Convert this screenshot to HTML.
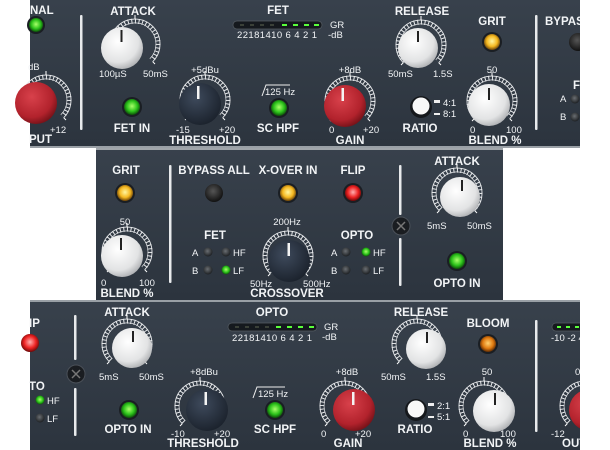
<!DOCTYPE html>
<html><head><meta charset="utf-8"><style>
html,body{margin:0;padding:0;background:#fff;width:610px;height:450px;overflow:hidden}
svg{display:block}
text{font-family:"Liberation Sans",sans-serif;fill:#f2f4f6;font-weight:bold}
.s{font-size:9.5px;font-weight:normal}
.l{font-size:11.5px}
</style></head><body>
<svg width="610" height="450" viewBox="0 0 610 450" xmlns="http://www.w3.org/2000/svg">
<defs>
<linearGradient id="pn" x1="0" y1="0" x2="0" y2="1"><stop offset="0" stop-color="#38414c"/><stop offset="1" stop-color="#2c343e"/></linearGradient>
<radialGradient id="wk" cx="0.4" cy="0.35" r="0.7"><stop offset="0" stop-color="#ffffff"/><stop offset="0.7" stop-color="#e2e3e4"/><stop offset="1" stop-color="#a9abae"/></radialGradient>
<radialGradient id="dk" cx="0.4" cy="0.35" r="0.7"><stop offset="0" stop-color="#3e4a5c"/><stop offset="1" stop-color="#1a212b"/></radialGradient>
<radialGradient id="rk" cx="0.4" cy="0.35" r="0.7"><stop offset="0" stop-color="#d8414b"/><stop offset="0.7" stop-color="#b2222c"/><stop offset="1" stop-color="#6e1016"/></radialGradient>
<radialGradient id="gl" cx="0.5" cy="0.45" r="0.55"><stop offset="0" stop-color="#a8ff6a"/><stop offset="0.6" stop-color="#2bc21a"/><stop offset="1" stop-color="#0d4a0a"/></radialGradient>
<radialGradient id="yl" cx="0.5" cy="0.45" r="0.55"><stop offset="0" stop-color="#fff6a0"/><stop offset="0.6" stop-color="#f5b820"/><stop offset="1" stop-color="#6a4208"/></radialGradient>
<radialGradient id="ol" cx="0.5" cy="0.45" r="0.55"><stop offset="0" stop-color="#ffd070"/><stop offset="0.6" stop-color="#e07a10"/><stop offset="1" stop-color="#5a2a05"/></radialGradient>
<radialGradient id="rl" cx="0.5" cy="0.45" r="0.55"><stop offset="0" stop-color="#ffb0b0"/><stop offset="0.6" stop-color="#ee2222"/><stop offset="1" stop-color="#6a0808"/></radialGradient>
<radialGradient id="bl" cx="0.45" cy="0.4" r="0.6"><stop offset="0" stop-color="#555"/><stop offset="1" stop-color="#111"/></radialGradient>
<radialGradient id="sl" cx="0.45" cy="0.4" r="0.6"><stop offset="0" stop-color="#6a6e72"/><stop offset="1" stop-color="#1c1f22"/></radialGradient>
<g id="ring">
<path d="M-16.3 16.3 A23 23 0 1 1 16.3 16.3" fill="none" stroke="#e8eaec" stroke-width="5" stroke-dasharray="1 2.6"/>
<path d="M-17.7 17.7 A25 25 0 1 1 17.7 17.7" fill="none" stroke="#e8eaec" stroke-width="0.9"/>
<path d="M-14.8 14.8 A21 21 0 1 1 14.8 14.8" fill="none" stroke="#e8eaec" stroke-width="0.7"/>
<line x1="0" y1="-25" x2="0" y2="-29" stroke="#fff" stroke-width="1"/>
<line x1="-17.7" y1="17.7" x2="-20" y2="20" stroke="#fff" stroke-width="1"/>
<line x1="17.7" y1="17.7" x2="20" y2="20" stroke="#fff" stroke-width="1"/>
</g>
<g id="bz"><circle r="10" fill="#1a1e23"/></g>
</defs>

<rect x="30" y="0" width="550" height="147" fill="url(#pn)"/>
<rect x="30" y="146" width="550" height="2" fill="#9aa0a6"/>
<rect x="96" y="148" width="407" height="152" fill="url(#pn)"/>
<rect x="96" y="148" width="407" height="2" fill="#a0a5aa"/>
<rect x="30" y="301" width="550" height="149" fill="url(#pn)"/>
<rect x="30" y="300" width="550" height="2" fill="#9aa0a6"/>

<!-- PANEL 1 -->
<text x="30" y="14" class="l">NAL</text>
<circle cx="36" cy="25" r="9" fill="#1a1e23"/><circle cx="36" cy="25" r="7" fill="url(#gl)"/>
<text x="28" y="70" class="s">dB</text>
<g transform="translate(46,100)"><use href="#ring"/></g>
<circle cx="36" cy="103" r="21" fill="url(#rk)"/>
<text x="50" y="133" class="s">+12</text>
<text x="29" y="143" class="l">PUT</text>
<rect x="80" y="15" width="2.5" height="115" rx="1" fill="#e8eaec"/>

<text x="133" y="15" class="l" text-anchor="middle">ATTACK</text>
<g transform="translate(135,44)"><use href="#ring"/></g>
<circle cx="122" cy="48" r="21" fill="url(#wk)"/>
<rect x="120.5" y="30" width="2" height="12" fill="#222"/>
<text x="99" y="77" class="s">100µS</text>
<text x="143" y="77" class="s">50mS</text>
<circle cx="132" cy="107" r="10" fill="#1a1e23"/><circle cx="132" cy="107" r="8" fill="url(#gl)"/>
<text x="132" y="132" class="l" text-anchor="middle">FET IN</text>

<text x="205" y="73" class="s" text-anchor="middle">+5dBu</text>
<g transform="translate(205,100)"><use href="#ring"/></g>
<circle cx="200" cy="104" r="21" fill="url(#dk)"/>
<rect x="197" y="86" width="2.5" height="13" fill="#f4f4f4"/>
<text x="176" y="133" class="s">-15</text>
<text x="219" y="133" class="s">+20</text>
<text x="205" y="144" class="l" text-anchor="middle">THRESHOLD</text>

<text x="278" y="14" class="l" text-anchor="middle">FET</text>
<rect x="233" y="21" width="89" height="8" rx="4" fill="#15191e" stroke="#555c63" stroke-width="0.7"/>
<g stroke-width="2"><line x1="240" y1="25" x2="244" y2="25" stroke="#3a4038"/><line x1="250" y1="25" x2="254" y2="25" stroke="#3a4038"/><line x1="260" y1="25" x2="264" y2="25" stroke="#3a4038"/><line x1="270" y1="25" x2="274" y2="25" stroke="#3a4038"/><line x1="282" y1="25" x2="287" y2="25" stroke="#5aff3a"/><line x1="293" y1="25" x2="298" y2="25" stroke="#5aff3a"/><line x1="304" y1="25" x2="309" y2="25" stroke="#5aff3a"/><line x1="314" y1="25" x2="319" y2="25" stroke="#5aff3a"/></g>
<text x="237" y="38" class="s" textLength="80">22181410 6 4 2 1</text>
<text x="330" y="28" class="s" font-weight="bold">GR</text>
<text x="328" y="38" class="s">-dB</text>
<path d="M262 96 L266 85 L290 85" fill="none" stroke="#eee" stroke-width="1"/>
<text x="265" y="95" class="s">125 Hz</text>
<circle cx="279" cy="108" r="10" fill="#1a1e23"/><circle cx="279" cy="108" r="8" fill="url(#gl)"/>
<text x="278" y="132" class="l" text-anchor="middle">SC HPF</text>

<text x="350" y="73" class="s" text-anchor="middle">+8dB</text>
<g transform="translate(350,101)"><use href="#ring"/></g>
<circle cx="345" cy="106" r="21" fill="url(#rk)"/>
<rect x="341.5" y="88" width="2.5" height="13" fill="#f4f4f4"/>
<text x="329" y="133" class="s">0</text>
<text x="363" y="133" class="s">+20</text>
<text x="350" y="144" class="l" text-anchor="middle">GAIN</text>

<text x="422" y="15" class="l" text-anchor="middle">RELEASE</text>
<g transform="translate(421,45)"><use href="#ring"/></g>
<circle cx="418" cy="48" r="20" fill="url(#wk)"/>
<rect x="417" y="31" width="2" height="11" fill="#222"/>
<text x="388" y="77" class="s">50mS</text>
<text x="433" y="77" class="s">1.5S</text>
<circle cx="421" cy="107" r="11" fill="#15181c"/>
<circle cx="421" cy="106" r="8.5" fill="#f8f8f8"/>
<rect x="434" y="100" width="6" height="3" fill="#eee"/><text x="443" y="106" class="s">4:1</text>
<rect x="434" y="113" width="6" height="2" fill="#eee"/><text x="443" y="117" class="s">8:1</text>
<text x="420" y="132" class="l" text-anchor="middle">RATIO</text>

<text x="492" y="25" class="l" text-anchor="middle">GRIT</text>
<circle cx="492" cy="42" r="10" fill="#1a1e23"/><circle cx="492" cy="42" r="8" fill="url(#yl)"/>
<text x="492" y="73" class="s" text-anchor="middle">50</text>
<g transform="translate(492,101)"><use href="#ring"/></g>
<circle cx="489" cy="105" r="21" fill="url(#wk)"/>
<rect x="488" y="88" width="2" height="12" fill="#222"/>
<text x="470" y="133" class="s">0</text>
<text x="506" y="133" class="s">100</text>
<text x="495" y="144" class="l" text-anchor="middle">BLEND %</text>
<rect x="535" y="15" width="2.5" height="115" rx="1" fill="#e8eaec"/>
<text x="545" y="25" class="l">BYPAS</text>
<circle cx="578" cy="42" r="9" fill="url(#bl)"/>
<text x="573" y="89" class="l">F</text>
<text x="560" y="102" class="s" font-weight="bold">A</text><circle cx="575" cy="99" r="4.5" fill="url(#sl)"/>
<text x="560" y="120" class="s" font-weight="bold">B</text><circle cx="575" cy="117" r="4.5" fill="url(#sl)"/>

<!-- PANEL 2 -->
<text x="126" y="174" class="l" text-anchor="middle">GRIT</text>
<circle cx="125" cy="193" r="10" fill="#1a1e23"/><circle cx="125" cy="193" r="8" fill="url(#yl)"/>
<text x="125" y="225" class="s" text-anchor="middle">50</text>
<g transform="translate(127,252)"><use href="#ring"/></g>
<circle cx="122" cy="256" r="21" fill="url(#wk)"/>
<rect x="120" y="238" width="2" height="12" fill="#222"/>
<text x="101" y="286" class="s">0</text>
<text x="139" y="286" class="s">100</text>
<text x="127" y="297" class="l" text-anchor="middle">BLEND %</text>
<rect x="169" y="165" width="2.5" height="118" rx="1" fill="#e8eaec"/>

<text x="214" y="174" class="l" text-anchor="middle">BYPASS ALL</text>
<circle cx="214" cy="193" r="9" fill="url(#bl)"/>
<text x="288" y="174" class="l" text-anchor="middle">X-OVER IN</text>
<circle cx="288" cy="193" r="10" fill="#1a1e23"/><circle cx="288" cy="193" r="8" fill="url(#yl)"/>
<text x="353" y="174" class="l" text-anchor="middle">FLIP</text>
<circle cx="353" cy="193" r="10" fill="#1a1e23"/><circle cx="353" cy="193" r="8" fill="url(#rl)"/>

<text x="215" y="239" class="l" text-anchor="middle">FET</text>
<text x="192" y="256" class="s" font-weight="bold">A</text><circle cx="208" cy="252" r="4.5" fill="url(#sl)"/><circle cx="226" cy="252" r="4.5" fill="url(#sl)"/><text x="233" y="256" class="s" font-weight="bold">HF</text>
<text x="192" y="274" class="s" font-weight="bold">B</text><circle cx="208" cy="270" r="4.5" fill="url(#sl)"/><circle cx="226" cy="270" r="4.5" fill="url(#gl)"/><text x="233" y="274" class="s" font-weight="bold">LF</text>

<text x="287" y="225" class="s" text-anchor="middle">200Hz</text>
<g transform="translate(288,256)"><use href="#ring"/></g>
<circle cx="289" cy="261" r="21" fill="url(#dk)"/>
<rect x="287.5" y="243" width="2.5" height="13" fill="#f4f4f4"/>
<text x="250" y="287" class="s">50Hz</text>
<text x="303" y="287" class="s">500Hz</text>
<text x="287" y="297" class="l" text-anchor="middle">CROSSOVER</text>

<text x="357" y="239" class="l" text-anchor="middle">OPTO</text>
<text x="331" y="256" class="s" font-weight="bold">A</text><circle cx="346" cy="252" r="4.5" fill="url(#sl)"/><circle cx="366" cy="252" r="4.5" fill="url(#gl)"/><text x="373" y="256" class="s" font-weight="bold">HF</text>
<text x="331" y="274" class="s" font-weight="bold">B</text><circle cx="346" cy="270" r="4.5" fill="url(#sl)"/><circle cx="366" cy="270" r="4.5" fill="url(#sl)"/><text x="373" y="274" class="s" font-weight="bold">LF</text>

<rect x="399" y="165" width="2.5" height="50" rx="1" fill="#e8eaec"/>
<rect x="399" y="238" width="2.5" height="48" rx="1" fill="#e8eaec"/>
<circle cx="401" cy="226" r="9" fill="#1a1d21" stroke="#4a5058" stroke-width="1"/>
<path d="M397 222 L405 230 M405 222 L397 230" stroke="#777" stroke-width="1.5"/>

<text x="457" y="165" class="l" text-anchor="middle">ATTACK</text>
<g transform="translate(457,193)"><use href="#ring"/></g>
<circle cx="460" cy="197" r="20" fill="url(#wk)"/>
<rect x="461" y="180" width="2" height="11" fill="#222"/>
<text x="427" y="229" class="s">5mS</text>
<text x="467" y="229" class="s">50mS</text>
<circle cx="457" cy="261" r="10" fill="#1a1e23"/><circle cx="457" cy="261" r="8" fill="url(#gl)"/>
<text x="457" y="287" class="l" text-anchor="middle">OPTO IN</text>

<!-- PANEL 3 -->
<text x="29" y="327" class="l">IP</text>
<circle cx="30" cy="343" r="9" fill="url(#rl)"/>
<text x="29" y="390" class="l">TO</text>
<circle cx="40" cy="400" r="4.5" fill="url(#gl)"/><text x="47" y="404" class="s" font-weight="bold">HF</text>
<circle cx="40" cy="418" r="4.5" fill="url(#sl)"/><text x="47" y="422" class="s" font-weight="bold">LF</text>
<rect x="74" y="315" width="2.5" height="45" rx="1" fill="#e8eaec"/>
<rect x="74" y="388" width="2.5" height="48" rx="1" fill="#e8eaec"/>
<circle cx="76" cy="374" r="9" fill="#1a1d21" stroke="#4a5058" stroke-width="1"/>
<path d="M72 370 L80 378 M80 370 L72 378" stroke="#777" stroke-width="1.5"/>

<text x="127" y="316" class="l" text-anchor="middle">ATTACK</text>
<g transform="translate(127,344)"><use href="#ring"/></g>
<circle cx="132" cy="348" r="20" fill="url(#wk)"/>
<rect x="132" y="331" width="2" height="11" fill="#222"/>
<text x="99" y="380" class="s">5mS</text>
<text x="139" y="380" class="s">50mS</text>
<circle cx="129" cy="410" r="10" fill="#1a1e23"/><circle cx="129" cy="410" r="8" fill="url(#gl)"/>
<text x="128" y="433" class="l" text-anchor="middle">OPTO IN</text>

<text x="204" y="375" class="s" text-anchor="middle">+8dBu</text>
<g transform="translate(200,406)"><use href="#ring"/></g>
<circle cx="207" cy="410" r="21" fill="url(#dk)"/>
<rect x="204.5" y="392" width="2.5" height="13" fill="#f4f4f4"/>
<text x="171" y="437" class="s">-10</text>
<text x="214" y="437" class="s">+20</text>
<text x="203" y="447" class="l" text-anchor="middle">THRESHOLD</text>

<text x="272" y="316" class="l" text-anchor="middle">OPTO</text>
<rect x="228" y="323" width="89" height="8" rx="4" fill="#15191e" stroke="#555c63" stroke-width="0.7"/>
<g stroke-width="2"><line x1="235" y1="327" x2="239" y2="327" stroke="#3a4038"/><line x1="245" y1="327" x2="249" y2="327" stroke="#3a4038"/><line x1="255" y1="327" x2="259" y2="327" stroke="#3a4038"/><line x1="265" y1="327" x2="269" y2="327" stroke="#3a4038"/><line x1="276" y1="327" x2="281" y2="327" stroke="#5aff3a"/><line x1="287" y1="327" x2="292" y2="327" stroke="#5aff3a"/><line x1="298" y1="327" x2="303" y2="327" stroke="#5aff3a"/><line x1="309" y1="327" x2="314" y2="327" stroke="#5aff3a"/></g>
<text x="232" y="341" class="s" textLength="80">22181410 6 4 2 1</text>
<text x="324" y="330" class="s" font-weight="bold">GR</text>
<text x="322" y="340" class="s">-dB</text>
<path d="M253 398 L257 387 L285 387" fill="none" stroke="#eee" stroke-width="1"/>
<text x="258" y="397" class="s">125 Hz</text>
<circle cx="275" cy="410" r="10" fill="#1a1e23"/><circle cx="275" cy="410" r="8" fill="url(#gl)"/>
<text x="275" y="433" class="l" text-anchor="middle">SC HPF</text>

<text x="347" y="375" class="s" text-anchor="middle">+8dB</text>
<g transform="translate(345,406)"><use href="#ring"/></g>
<circle cx="354" cy="410" r="21" fill="url(#rk)"/>
<rect x="352" y="392" width="2.5" height="13" fill="#f4f4f4"/>
<text x="321" y="437" class="s">0</text>
<text x="355" y="437" class="s">+20</text>
<text x="348" y="447" class="l" text-anchor="middle">GAIN</text>

<text x="421" y="316" class="l" text-anchor="middle">RELEASE</text>
<g transform="translate(417,344)"><use href="#ring"/></g>
<circle cx="426" cy="349" r="20" fill="url(#wk)"/>
<rect x="426" y="332" width="2" height="11" fill="#222"/>
<text x="381" y="380" class="s">50mS</text>
<text x="426" y="380" class="s">1.5S</text>
<circle cx="416" cy="410" r="11" fill="#15181c"/>
<circle cx="416" cy="409" r="8.5" fill="#f8f8f8"/>
<rect x="428" y="403" width="6" height="3" fill="#eee"/><text x="437" y="409" class="s">2:1</text>
<rect x="428" y="416" width="6" height="2" fill="#eee"/><text x="437" y="420" class="s">5:1</text>
<text x="415" y="433" class="l" text-anchor="middle">RATIO</text>

<text x="488" y="327" class="l" text-anchor="middle">BLOOM</text>
<circle cx="488" cy="344" r="10" fill="#1a1e23"/><circle cx="488" cy="344" r="8" fill="url(#ol)"/>
<text x="487" y="375" class="s" text-anchor="middle">50</text>
<g transform="translate(484,406)"><use href="#ring"/></g>
<circle cx="494" cy="411" r="21" fill="url(#wk)"/>
<rect x="494" y="393" width="2" height="12" fill="#222"/>
<text x="463" y="437" class="s">0</text>
<text x="500" y="437" class="s">100</text>
<text x="490" y="447" class="l" text-anchor="middle">BLEND %</text>
<rect x="535" y="320" width="2.5" height="112" rx="1" fill="#e8eaec"/>
<rect x="552" y="323" width="40" height="8" rx="4" fill="#15191e" stroke="#555c63" stroke-width="0.7"/>
<g stroke-width="2" stroke="#5aff3a"><line x1="557" y1="327" x2="561" y2="327"/><line x1="566" y1="327" x2="570" y2="327"/><line x1="575" y1="327" x2="579" y2="327"/></g>
<text x="551" y="341" class="s">-10 -2 4</text>
<text x="575" y="375" class="s">0</text>
<g transform="translate(585,406)"><use href="#ring"/></g>
<circle cx="590" cy="410" r="21" fill="url(#rk)"/>
<text x="551" y="437" class="s">-12</text>
<text x="562" y="447" class="l">OUT</text>
<rect x="580" y="301" width="30" height="149" fill="#fff"/>
<rect x="580" y="0" width="30" height="148" fill="#fff"/>
</svg>
</body></html>
